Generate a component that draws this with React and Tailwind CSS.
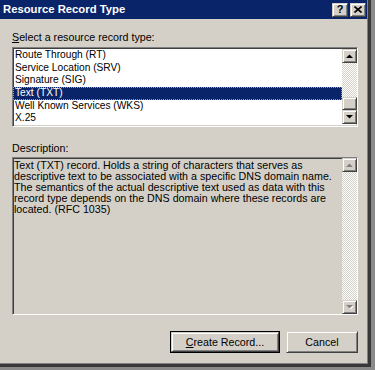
import React from "react";

const raised =
  "border border-t-[#d4d0c8] border-l-[#d4d0c8] border-r-[#404040] border-b-[#404040] shadow-[inset_1px_1px_#ffffff,inset_-1px_-1px_#808080] bg-[#d4d0c8]";
const sunken =
  "border border-t-[#808080] border-l-[#808080] border-r-white border-b-white shadow-[inset_1px_1px_#404040,inset_-1px_-1px_#d4d0c8]";
const track =
  "bg-[repeating-conic-gradient(#ffffff_0_25%,#d4d0c8_0_50%)] bg-[length:2px_2px]";

const Arrow = ({ up, disabled }) => (
  <svg width="7" height="4" viewBox="0 0 7 4" className="block">
    {disabled && (
      <path
        d={up ? "M1 5h7L4.5 1.5z" : "M1 1h7L4.5 4.5z"}
        fill="#ffffff"
      />
    )}
    <path
      d={up ? "M0 4h7L3.5 0.5z" : "M0 0h7L3.5 3.5z"}
      fill={disabled ? "#808080" : "#000000"}
    />
  </svg>
);

const ScrollButton = ({ up, disabled }) => (
  <div className={`${raised} h-[14px] flex items-center justify-center`}>
    <Arrow up={up} disabled={disabled} />
  </div>
);

const records = [
  "Route Through (RT)",
  "Service Location (SRV)",
  "Signature (SIG)",
  "Text (TXT)",
  "Well Known Services (WKS)",
  "X.25",
];

const description = [
  "Text (TXT) record. Holds a string of characters that serves as",
  "descriptive text to be associated with a specific DNS domain name.",
  "The semantics of the actual descriptive text used as data with this",
  "record type depends on the DNS domain where these records are",
  "located. (RFC 1035)",
];

export default function App() {
  return (
    <div className="w-[375px] h-[370px] bg-[#8a8a8a] overflow-hidden [font-family:'Liberation_Sans',Arial,sans-serif] text-[10.7px] text-black">
      <div className="w-[371px] h-[367px] border-r-[3px] border-b-[3px] border-[#383838]">
        <div className="h-full border-r border-b border-[#808080] bg-[#d4d0c8] flex flex-col">
          {/* title bar */}
          <div className="h-[19px] bg-[#0a246a] flex items-center justify-between pl-[3px] pr-[1px]">
            <span className="text-white font-bold text-[11.3px] leading-none">
              Resource Record Type
            </span>
            <div className="flex gap-[2px]">
              <div className={`${raised} w-[16px] h-[14px] flex items-center justify-center`}>
                <span className="font-bold text-[11px] leading-none">?</span>
              </div>
              <div className={`${raised} w-[16px] h-[14px] flex items-center justify-center`}>
                <svg width="8" height="7" viewBox="0 0 8 7">
                  <path d="M0.5 0.5L7.5 6.5M7.5 0.5L0.5 6.5" stroke="#000" strokeWidth="1.6" />
                </svg>
              </div>
            </div>
          </div>

          <div className="flex flex-col pl-[12px] pr-[9px]">
            <div className="mt-[12px] leading-[13px]">
              <span className="underline">S</span>elect a resource record type:
            </div>

            <div className={`${sunken} mt-[3px] h-[80px] bg-white flex text-[10.2px]`}>
              <div className="flex-1 pt-px">
                {records.map((r) => (
                  <div
                    key={r}
                    className={
                      r === "Text (TXT)"
                        ? "h-[12.66px] leading-[10.66px] px-[1px] bg-[#0a246a] text-white border border-dotted border-[#8d9bc0]"
                        : "h-[12.66px] leading-[12.66px] px-[2px]"
                    }
                  >
                    {r}
                  </div>
                ))}
              </div>
              <div className="w-[15px] flex flex-col pt-px">
                <ScrollButton up />
                <div className={`${track} h-[34px]`} />
                <div className={`${raised} h-[13px]`} />
                <ScrollButton />
              </div>
            </div>

            <div className="mt-[15px] leading-[13px]">Description:</div>

            <div className={`${sunken} mt-[2px] h-[158px] flex`}>
              <div className="flex-1 pl-[1px] pt-[2px] leading-[11px]">
                {description.map((l) => (
                  <div key={l} className="whitespace-nowrap">
                    {l}
                  </div>
                ))}
              </div>
              <div className="w-[15px] flex flex-col">
                <ScrollButton up disabled />
                <div className={`${track} flex-1`} />
                <ScrollButton disabled />
              </div>
            </div>

            <div className="mt-[16px] flex justify-end gap-[6px]">
              <div className="w-[110px] h-[22px] border border-black">
                <div className={`${raised} h-full flex items-center justify-center`}>
                  <span>
                    <span className="underline">C</span>reate Record...
                  </span>
                </div>
              </div>
              <div className={`${raised} w-[72px] h-[22px] flex items-center justify-center`}>
                Cancel
              </div>
            </div>
          </div>
        </div>
      </div>
    </div>
  );
}
